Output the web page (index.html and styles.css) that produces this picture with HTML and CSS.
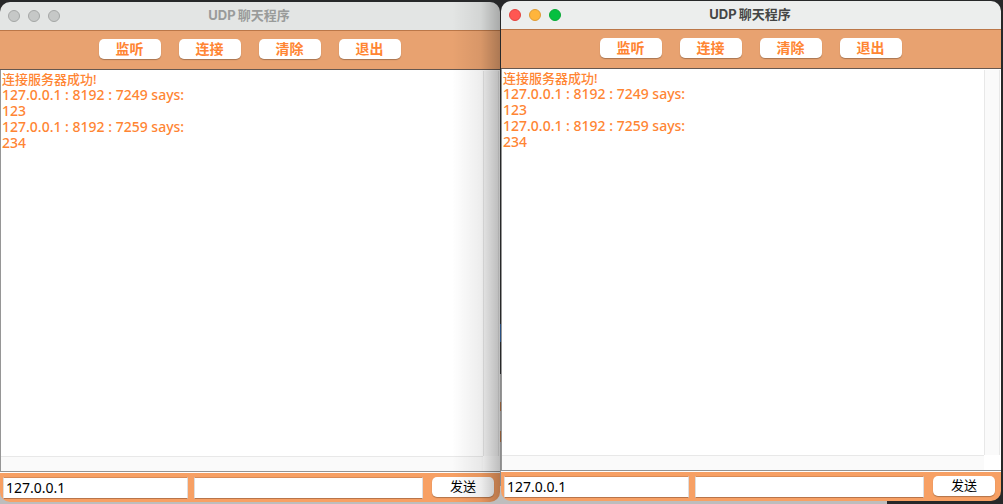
FILE: index.html
```html
<!DOCTYPE html>
<html lang="zh-CN">
<head>
<meta charset="utf-8">
<meta name="viewport" content="width=device-width, initial-scale=1">
<title>UDP聊天程序</title>
<link rel="stylesheet" href="styles.css">
</head>
<body>
<main class="desktop">
  <section class="window inactive" aria-label="UDP聊天程序 7249">
    <header class="titlebar">
      <div class="lights">
        <button class="light close" aria-label="关闭"></button>
        <button class="light minimize" aria-label="最小化"></button>
        <button class="light maximize" aria-label="缩放"></button>
      </div>
      <h1 class="title">UDP<span class="title-cjk">聊天程序</span></h1>
    </header>
    <nav class="toolbar">
      <button class="button">监听</button>
      <button class="button">连接</button>
      <button class="button">清除</button>
      <button class="button">退出</button>
    </nav>
    <div class="log-pane">
      <div class="log" role="log" aria-label="聊天记录">
        <p class="line notice">连接服务器成功!</p>
        <p class="line">127.0.0.1 : 8192 : 7249 says:</p>
        <p class="line">123</p>
        <p class="line">127.0.0.1 : 8192 : 7259 says:</p>
        <p class="line">234</p>
      </div>
      <div class="track-vertical"></div>
      <div class="track-horizontal"></div>
    </div>
    <form class="composer">
      <input class="field host" type="text" value="127.0.0.1" aria-label="地址">
      <input class="field message" type="text" aria-label="消息">
      <button class="button send" type="button">发送</button>
    </form>
  </section>
  <section class="window active" aria-label="UDP聊天程序 7259">
    <header class="titlebar">
      <div class="lights">
        <button class="light close" aria-label="关闭"></button>
        <button class="light minimize" aria-label="最小化"></button>
        <button class="light maximize" aria-label="缩放"></button>
      </div>
      <h1 class="title">UDP<span class="title-cjk">聊天程序</span></h1>
    </header>
    <nav class="toolbar">
      <button class="button">监听</button>
      <button class="button">连接</button>
      <button class="button">清除</button>
      <button class="button">退出</button>
    </nav>
    <div class="log-pane">
      <div class="log" role="log" aria-label="聊天记录">
        <p class="line notice">连接服务器成功!</p>
        <p class="line">127.0.0.1 : 8192 : 7249 says:</p>
        <p class="line">123</p>
        <p class="line">127.0.0.1 : 8192 : 7259 says:</p>
        <p class="line">234</p>
      </div>
      <div class="track-vertical"></div>
      <div class="track-horizontal"></div>
    </div>
    <form class="composer">
      <input class="field host" type="text" value="127.0.0.1" aria-label="地址">
      <input class="field message" type="text" aria-label="消息">
      <button class="button send" type="button">发送</button>
    </form>
  </section>
</main>
</body>
</html>
```
FILE: styles.css
```css
* {
  box-sizing: border-box;
}

body {
  margin: 0;
  font-family: "Noto Sans", "Noto Sans CJK SC", sans-serif;
  font-size: 14px;
  line-height: 16px;
}

button,
input {
  margin: 0;
  border: 0;
  padding: 0;
  font: inherit;
}

.desktop {
  display: grid;
  grid-template-columns: 1fr 1fr;
  gap: 1px;
  min-height: 100vh;
  padding: 1px 2px 2px 0;
  background:
    linear-gradient(#bdbdbd, #bdbdbd) 0 100% / 887px 18px no-repeat,
    linear-gradient(#8b5a38, #8b5a38) 50% 402px / 4px 9px no-repeat,
    linear-gradient(#8b5a38, #8b5a38) 50% 431px / 4px 11px no-repeat,
    linear-gradient(#294f80, #294f80) 50% 324px / 4px 18px no-repeat,
    linear-gradient(#8c8c8c, #8c8c8c) 50% 100% / 4px 130px no-repeat,
    #272829;
}

.window {
  position: relative;
  display: flex;
  flex-direction: column;
  min-width: 0;
  border-radius: 10px;
  overflow: hidden;
}

.inactive {
  margin-top: 1px;
}

.active {
  margin-bottom: 1px;
}

.inactive::after {
  content: "";
  position: absolute;
  inset: 0 0 0 auto;
  width: 48px;
  background: linear-gradient(to right, rgba(0, 0, 0, 0), rgba(0, 0, 0, 0.07) 60%, rgba(0, 0, 0, 0.26));
  pointer-events: none;
}

.titlebar {
  display: grid;
  grid-template-columns: 1fr auto 1fr;
  align-items: center;
  height: 28px;
  padding: 0 10px 0 8px;
  background: #eceeed;
  color: #444645;
}

.inactive .titlebar {
  background: #e3e5e4;
  color: #999b9a;
}

.lights {
  display: flex;
  gap: 8px;
}

.light {
  width: 12px;
  height: 12px;
  border: 1px solid;
  border-radius: 50%;
}

.close {
  border-color: #e2443f;
  background: #ff5752;
}

.minimize {
  border-color: #de9b35;
  background: #ffb53c;
}

.maximize {
  border-color: #08a936;
  background: #05c040;
}

.inactive .light {
  border-color: #a5a7a6;
  background: #c6c8c7;
}

.title {
  display: flex;
  gap: 2px;
  margin: 0;
  padding-bottom: 2px;
  font-family: Inter, "Noto Sans CJK SC", sans-serif;
  font-size: 13px;
  font-weight: 700;
}

.toolbar {
  display: flex;
  align-items: flex-start;
  justify-content: center;
  gap: 18px;
  height: 40px;
  padding: 8px 1px 0 0;
  border-top: 1px solid #bb7748;
  border-bottom: 1px solid #665850;
  background: #e8a270;
}

.button {
  width: 62px;
  height: 20px;
  padding-bottom: 2px;
  border-radius: 5px;
  background: #fff;
  box-shadow: 0 1px 1px rgba(0, 0, 0, 0.28);
  color: #ff8533;
  font-family: "Noto Sans CJK SC", sans-serif;
  font-size: 14px;
  font-weight: 700;
  line-height: 18px;
}

.log-pane {
  flex: 1;
  display: grid;
  grid-template-columns: 1fr 17px;
  grid-template-rows: 1fr 15px;
  padding-top: 1px;
  border-left: 1px solid #969696;
  border-bottom: 1px solid #929292;
  background: #fff;
}

.log {
  padding: 0 1px;
  color: #ff8533;
  font-weight: 500;
}

.line {
  margin: 0;
}

.notice {
  font-size: 13px;
}

.track-vertical {
  margin-right: 1px;
  border: 1px solid #e8e8e8;
  border-width: 0 1px;
  background: #fafafa;
}

.track-horizontal {
  border-top: 1px solid #e8e8e8;
  background: #fafafa;
}

.composer {
  display: flex;
  align-items: flex-start;
  height: 30px;
  padding: 4px 6px 4px 3px;
  border-top: 1px solid #fff;
  background: #f7a064;
}

.field {
  min-width: 0;
  height: 22px;
  padding: 0 2px 2px;
  border: 1px solid #dedede;
  border-top-color: #d98b57;
  border-bottom-color: #b9754a;
  outline: 0;
  background: #fff;
  color: #000;
}

.host {
  flex: 184;
  margin-right: 6px;
}

.message {
  flex: 230;
  margin-right: 9px;
}

.send {
  color: #000;
  font-size: 13px;
  font-weight: 400;
}
```
